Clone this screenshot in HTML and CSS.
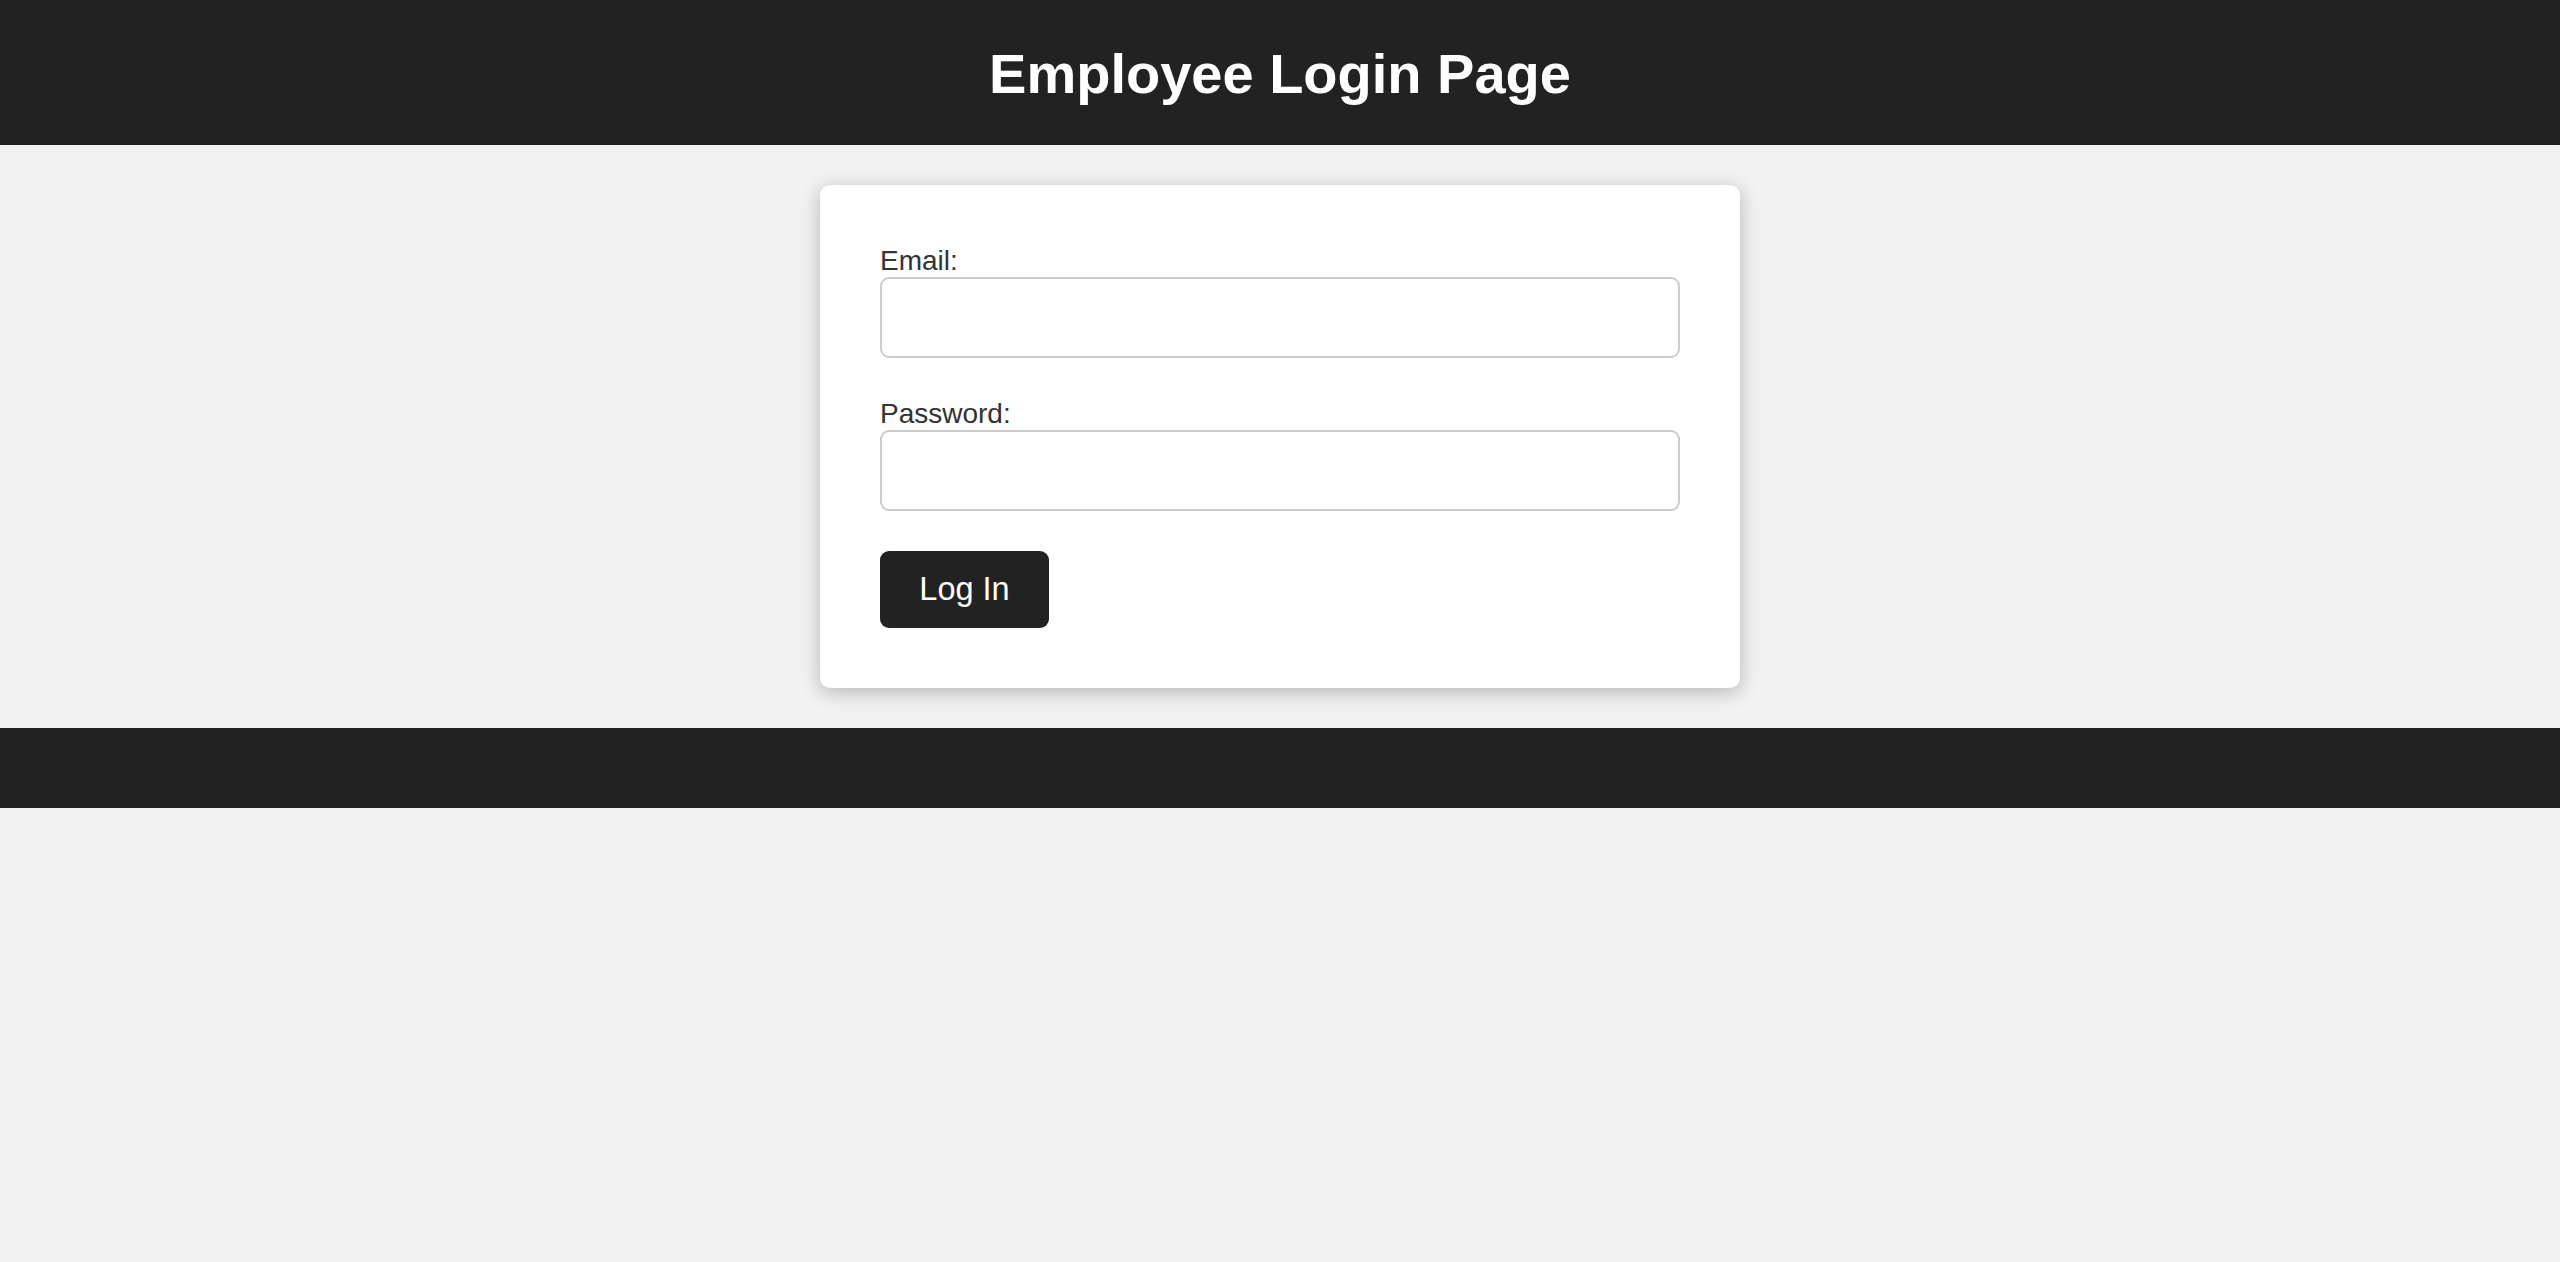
FILE: index.html
```html
<!DOCTYPE html>
<html lang="en">
<head>
<meta charset="utf-8">
<title>Employee Login Page</title>
<link rel="stylesheet" href="styles.css">
</head>
<body>
<header class="site-header">
  <h1 class="site-title">Employee Login Page</h1>
</header>
<main class="main">
  <form class="login-card">
    <label class="field-label" for="email">Email:</label>
    <input class="field-input" type="email" id="email" name="email">
    <label class="field-label field-label--spaced" for="password">Password:</label>
    <input class="field-input" type="password" id="password" name="password">
    <button class="login-button" type="submit">Log In</button>
  </form>
</main>
<footer class="site-footer"></footer>
</body>
</html>
```

FILE: styles.css
```css
html, body {
  margin: 0;
  padding: 0;
}
body {
  background: #f2f2f2;
  font-family: "Liberation Sans", Arial, sans-serif;
  color: #333;
}
.site-header {
  background: #222;
  height: 145px;
  box-sizing: border-box;
  padding-top: 3px;
  display: flex;
  align-items: center;
  justify-content: center;
}
.site-title {
  margin: 0;
  color: #fff;
  font-size: 56px;
  font-weight: bold;
  line-height: 1.15;
}
.main {
  padding: 40px 0;
  display: flex;
  justify-content: center;
}
.login-card {
  width: 800px;
  padding: 60px;
  background: #fff;
  border-radius: 10px;
  box-shadow: 0 4px 20px rgba(0, 0, 0, 0.26);
  display: flex;
  flex-direction: column;
  align-items: flex-start;
}
.field-label {
  display: block;
  font-size: 28px;
  line-height: 32px;
  color: #333;
}
.field-label--spaced {
  margin-top: 40px;
}
.field-input {
  box-sizing: border-box;
  width: 100%;
  height: 81px;
  margin: 0;
  border: 2px solid #ccc;
  border-radius: 9px;
  background: #fff;
  font-size: 28px;
  padding: 0 16px;
  font-family: inherit;
  outline: none;
}
.login-button {
  margin-top: 40px;
  box-sizing: border-box;
  height: 77px;
  width: 169px;
  padding: 0;
  border: none;
  border-radius: 9px;
  background: #222;
  color: #fff;
  font-family: "Liberation Sans", Arial, sans-serif;
  font-size: 32.5px;
  cursor: pointer;
}
.site-footer {
  background: #222;
  height: 80px;
}
```
